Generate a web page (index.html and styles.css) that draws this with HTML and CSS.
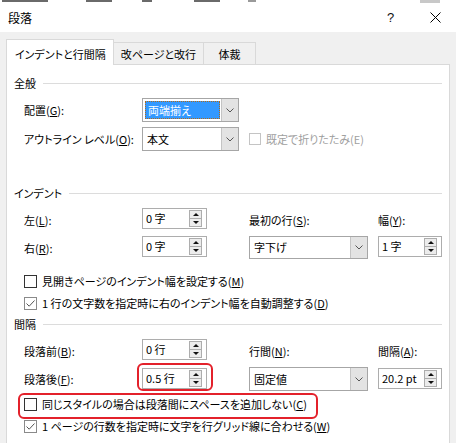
FILE: index.html
```html
<!DOCTYPE html>
<html lang="ja">
<head>
<meta charset="utf-8">
<title>段落</title>
<link rel="stylesheet" href="styles.css">
</head>
<body>
<div class="strip">
  <i class="frag f1"></i><i class="frag f2"></i><i class="frag f3"></i><i class="frag f4"></i><i class="frag f5"></i><i class="frag f6"></i>
</div>
<div class="titlebar">
  <span class="title">段落</span>
  <span class="help">?</span>
  <svg class="close" width="11" height="11" viewBox="0 0 11 11"><path d="M0.5 0.5 L10.5 10.5 M10.5 0.5 L0.5 10.5" stroke="#000" stroke-width="1" fill="none"/></svg>
</div>
<div class="dialog">
  <div class="tabs">
    <div class="tab tab1 active">インデントと行間隔</div>
    <div class="tab tab2">改ページと改行</div>
    <div class="tab tab3">体裁</div>
  </div>
  <div class="panel">
    <div class="ghead ghead-general"><span>全般</span><i class="gline"></i></div>
    <div class="grid grid-general">
      <span class="lbl">配置(<u>G</u>):</span>
      <div class="combo combo-short">
        <span class="cval"><span class="selbox">両端揃え</span></span>
        <span class="cbtn"><svg width="8" height="5" viewBox="0 0 8 5"><path d="M0.5 0.5 L4 4 L7.5 0.5" stroke="#555" fill="none"/></svg></span>
      </div>
      <span></span>
      <span class="lbl">アウトライン レベル(<u>O</u>):</span>
      <div class="combo combo-short">
        <span class="cval">本文</span>
        <span class="cbtn"><svg width="8" height="5" viewBox="0 0 8 5"><path d="M0.5 0.5 L4 4 L7.5 0.5" stroke="#555" fill="none"/></svg></span>
      </div>
      <label class="check disabled"><span class="cb"></span>既定で折りたたみ(E)</label>
    </div>

    <div class="ghead ghead-indent"><span>インデント</span><i class="gline"></i></div>
    <div class="grid grid-two">
      <span class="lbl lbl-low">左(<u>L</u>):</span>
      <div class="spin"><span class="val">0 字</span><span class="sbtns"><span class="up"></span><span class="dn"></span></span></div>
      <span></span>
      <span class="lbl lbl-low">最初の行(<u>S</u>):</span>
      <span></span>
      <span class="lbl lbl-low">幅(<u>Y</u>):</span>

      <span class="lbl">右(<u>R</u>):</span>
      <div class="spin"><span class="val">0 字</span><span class="sbtns"><span class="up"></span><span class="dn"></span></span></div>
      <span></span>
      <div class="combo combo-row">
        <span class="cval">字下げ</span>
        <span class="cbtn"><svg width="8" height="5" viewBox="0 0 8 5"><path d="M0.5 0.5 L4 4 L7.5 0.5" stroke="#555" fill="none"/></svg></span>
      </div>
      <span></span>
      <div class="spin"><span class="val">1 字</span><span class="sbtns"><span class="up"></span><span class="dn"></span></span></div>
    </div>
    <label class="check row-check first-check"><span class="cb"></span>見開きページのインデント幅を設定する(<u>M</u>)</label>
    <label class="check row-check"><span class="cb checked"><svg width="11" height="11" viewBox="0 0 11 11"><path d="M1.5 5.5 L4.2 8.2 L9.5 2.5" stroke="#555" stroke-width="1" fill="none"/></svg></span>1 行の文字数を指定時に右のインデント幅を自動調整する(<u>D</u>)</label>

    <div class="ghead ghead-spacing"><span>間隔</span><i class="gline"></i></div>
    <div class="grid grid-two">
      <span class="lbl lbl-low">段落前(<u>B</u>):</span>
      <div class="spin"><span class="val">0 行</span><span class="sbtns"><span class="up"></span><span class="dn"></span></span></div>
      <span></span>
      <span class="lbl lbl-low">行間(<u>N</u>):</span>
      <span></span>
      <span class="lbl lbl-low">間隔(<u>A</u>):</span>

      <span class="lbl">段落後(<u>F</u>):</span>
      <div class="spin spin-hl"><span class="val">0.5 行</span><span class="sbtns"><span class="up"></span><span class="dn"></span></span></div>
      <span></span>
      <div class="combo combo-row combo-tall">
        <span class="cval">固定値</span>
        <span class="cbtn"><svg width="8" height="5" viewBox="0 0 8 5"><path d="M0.5 0.5 L4 4 L7.5 0.5" stroke="#555" fill="none"/></svg></span>
      </div>
      <span></span>
      <div class="spin spin-down"><span class="val">20.2 pt</span><span class="sbtns"><span class="up"></span><span class="dn"></span></span></div>
    </div>
    <label class="check row-check check-hl"><span class="cb"></span>同じスタイルの場合は段落間にスペースを追加しない(<u>C</u>)</label>
    <label class="check row-check"><span class="cb checked"><svg width="11" height="11" viewBox="0 0 11 11"><path d="M1.5 5.5 L4.2 8.2 L9.5 2.5" stroke="#555" stroke-width="1" fill="none"/></svg></span>1 ページの行数を指定時に文字を行グリッド線に合わせる(<u>W</u>)</label>
  </div>
</div>
</body>
</html>
```
FILE: styles.css
```css
* { box-sizing: border-box; }
html, body { margin: 0; padding: 0; }
body {
  width: 456px;
  height: 443px;
  overflow: hidden;
  background: #f0f0f0;
  font-family: "Noto Sans CJK JP", "Noto Sans", sans-serif;
  font-size: 11px;
  line-height: 1;
  color: #000;
  font-feature-settings: "palt";
}
u { text-decoration: underline; text-underline-offset: 1px; }

.strip { height: 3px; background: #fff; overflow: hidden; display: flex; align-items: flex-start; }
.frag { display: block; height: 2px; background: #6a6a6a; }
.f1 { width: 46px; margin-left: 2px; }
.f2 { width: 26px; margin-left: 38px; }
.f3 { width: 10px; margin-left: 30px; }
.f4 { width: 26px; margin-left: 42px; }
.f5 { width: 8px; margin-left: 28px; background: #9a9a9a; }
.f6 { width: 20px; margin-left: 164px; background: #c8c8c8; height: 3px; }

.titlebar {
  height: 29px;
  background: #fff;
  display: flex;
  align-items: center;
  padding-left: 8px;
}
.title { flex: 1; font-size: 12px; }
.help { font-size: 13px; font-family: "Liberation Sans", sans-serif; width: 8px; margin-right: 35px; color: #111; }
.close { margin-right: 15px; }

.dialog { padding: 7px 0 0 6px; }
.tabs { display: flex; align-items: flex-end; height: 25px; }
.tab {
  height: 22px;
  border: 1px solid #d9d9d9;
  border-bottom: none;
  background: #f0f0f0;
  display: flex;
  align-items: center;
  justify-content: center;
  font-size: 11px;
  padding-top: 1px;
}
.tab1 { width: 108px; }
.tab2 { width: 90px; border-left: none; }
.tab3 { width: 52px; border-left: none; }
.tab.active {
  height: 26px;
  margin-bottom: -1px;
  background: #fff;
  position: relative;
  z-index: 1;
  padding-top: 3px;
  justify-content: flex-start;
  padding-left: 8px;
}

.panel {
  width: 444px;
  height: 400px;
  background: #fff;
  border: 1px solid #d9d9d9;
  border-bottom: none;
}

.ghead {
  display: flex;
  align-items: center;
  height: 16px;
  padding: 0 7px;
  font-size: 11px;
}
.gline { flex: 1; height: 1px; background: #dcdcdc; margin-left: 7px; }
.ghead-general { margin-top: 10px; }
.ghead-indent { margin-top: 34px; }
.ghead-spacing { margin-top: 2px; }

.grid {
  display: grid;
  margin: 7px 0 0 17px;
  row-gap: 7px;
  align-items: center;
}
.grid-general {
  grid-template-columns: 118px 107px 180px;
  grid-template-rows: 24px 24px;
  row-gap: 5px;
}
.grid-two {
  grid-template-columns: 118px 65px 42px 119px 10px 64px;
  grid-template-rows: 21px 24px;
}
.lbl { white-space: nowrap; }
.lbl-low { padding-top: 4px; }

.combo {
  height: 24px;
  border: 1px solid #a6a6a6;
  background: #fff;
  display: flex;
}
.combo-short { width: 97px; }
.combo-row { width: 119px; height: 23px; align-self: start; }
.combo-tall { height: 24px; }
.cval { flex: 1; display: flex; align-items: center; padding-left: 4px; }
.cbtn {
  width: 17px;
  background: #e3e3e3;
  border-left: 1px solid #c4c4c4;
  display: flex;
  align-items: center;
  justify-content: center;
}
.combo-short .cval { padding: 2px 1px 2px 2px; }
.combo-short .cval:not(:has(.selbox)) { padding: 0 0 0 4px; }
.selbox {
  flex: 1;
  align-self: stretch;
  display: flex;
  align-items: center;
  padding-left: 2px;
  background: #3399ff;
  color: #fff;
  border: 1px dotted #b06a1a;
}

.spin {
  width: 65px;
  height: 21px;
  border: 1px solid #adadad;
  background: #fff;
  display: flex;
  align-items: center;
  justify-content: space-between;
  padding: 0 4px 0 3px;
  align-self: start;
  position: relative;
}
.grid-two > .spin:last-child { width: 64px; }
.spin-down { margin-top: 1px; }
.sbtns {
  width: 13px;
  height: 17px;
  border: 1px solid #adadad;
  background: #ececec;
  display: flex;
  flex-direction: column;
}
.up, .dn { flex: 1; display: flex; align-items: center; justify-content: center; }
.up { border-bottom: 1px solid #adadad; }
.up::before {
  content: "";
  border-left: 3px solid transparent;
  border-right: 3px solid transparent;
  border-bottom: 3px solid #111;
}
.dn::before {
  content: "";
  border-left: 3px solid transparent;
  border-right: 3px solid transparent;
  border-top: 3px solid #111;
}
.spin-hl { margin-top: 1px; }
.spin-hl::after {
  content: "";
  position: absolute;
  left: -6px;
  right: -7px;
  top: -6px;
  bottom: -3px;
  border: 2px solid #e3212b;
  border-radius: 6px;
}

.check { display: flex; align-items: center; white-space: nowrap; }
.cb {
  width: 13px;
  height: 13px;
  border: 1px solid #333;
  background: #fff;
  margin-right: 5px;
  display: flex;
  align-items: center;
  justify-content: center;
  flex: none;
}
.cb.checked { border-color: #8a8a8a; }
.check.disabled { color: #a0a0a0; }
.check.disabled .cb { border-color: #c4c4c4; width: 12px; height: 12px; }

.row-check { height: 22px; margin-left: 17px; position: relative; }
.first-check { margin-top: 10px; }
.check-hl { margin-top: 2px; width: 290px; }
.check-hl::after {
  content: "";
  position: absolute;
  left: -6px;
  top: 0;
  width: 296px;
  height: 22px;
  border: 2px solid #e3212b;
  border-radius: 6px;
}
```
